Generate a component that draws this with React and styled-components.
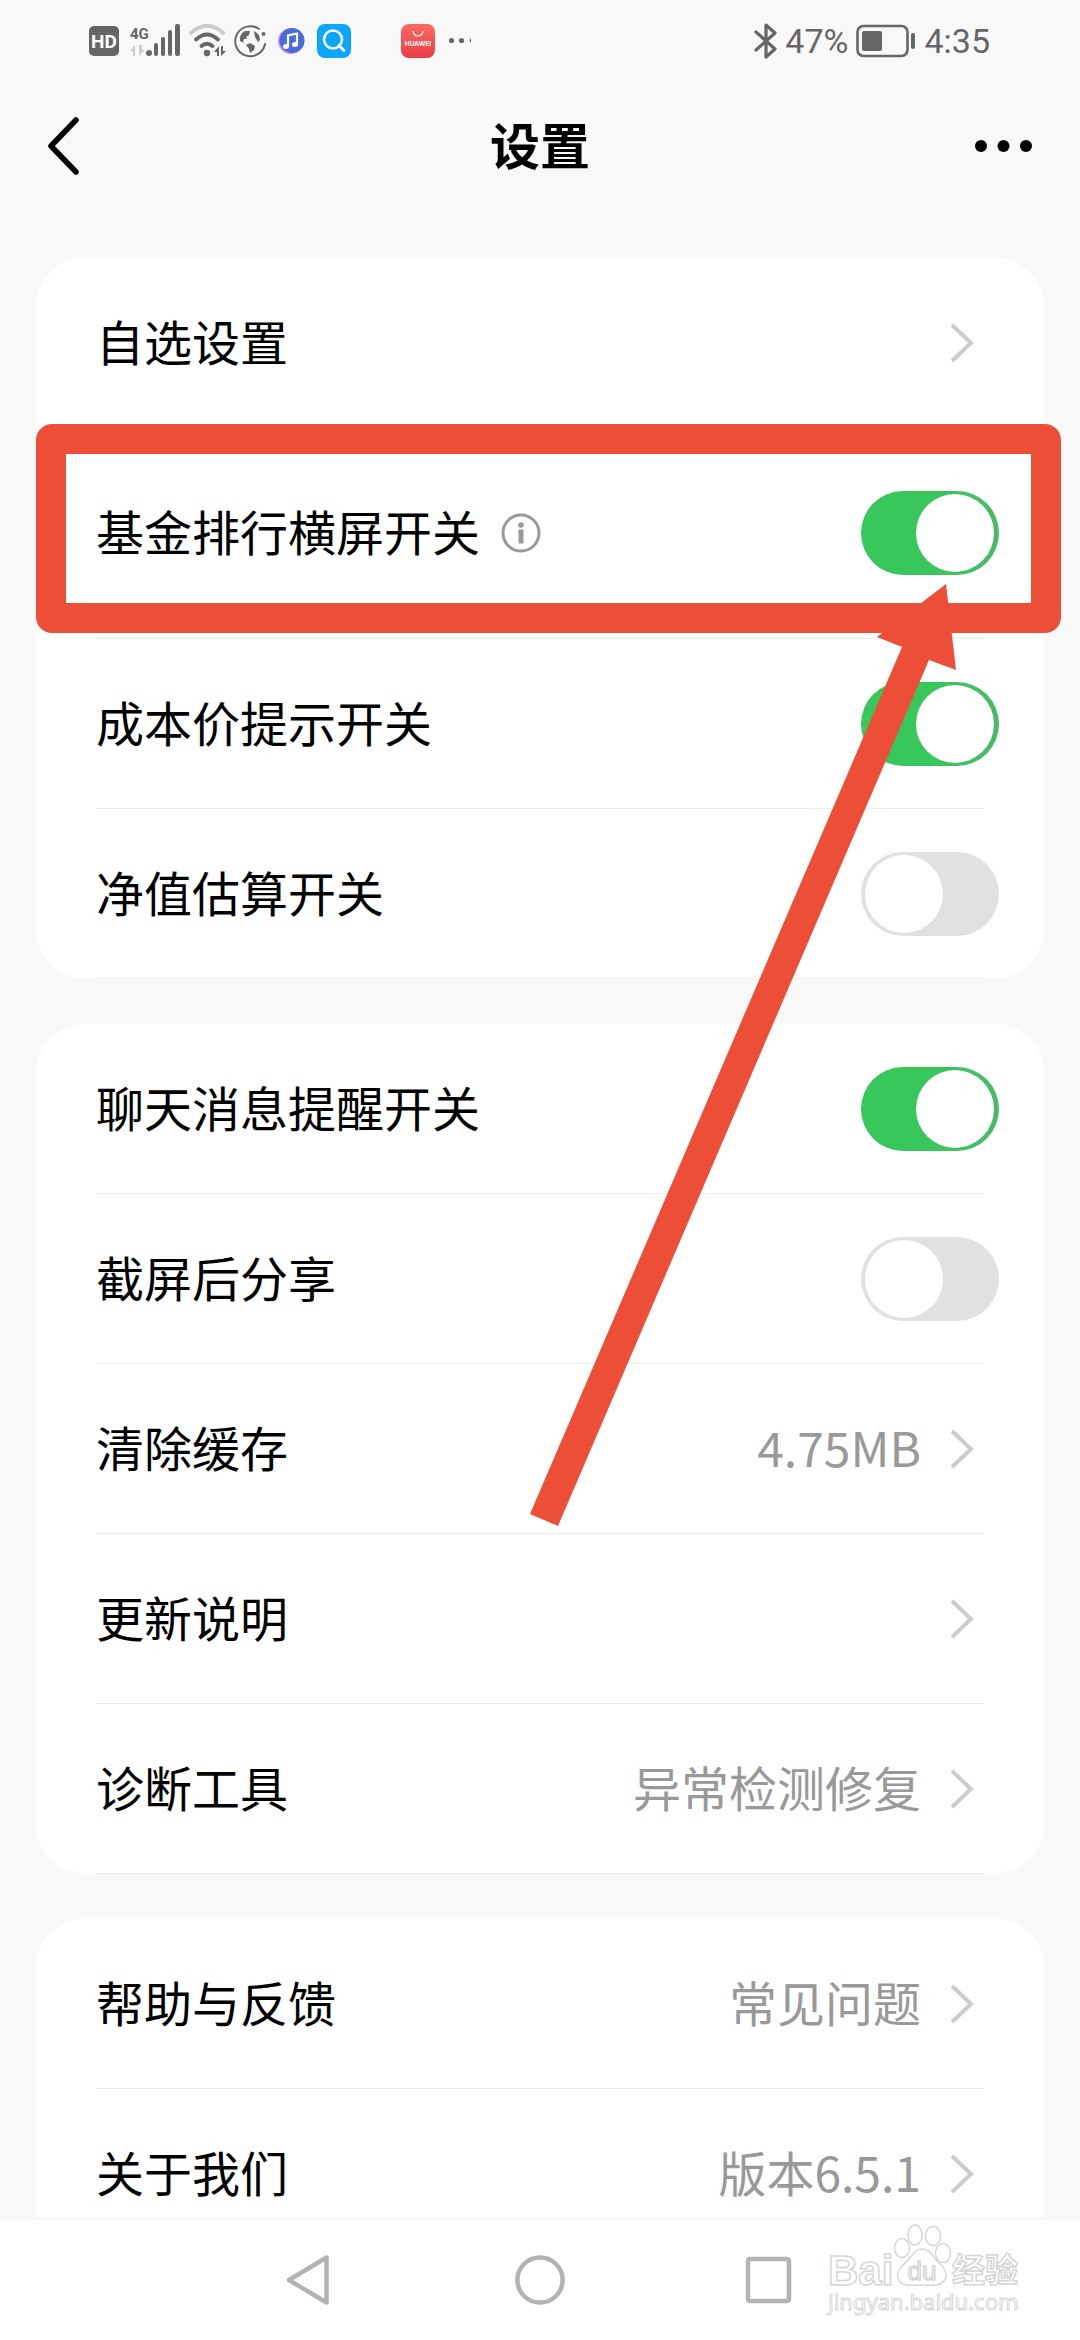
import React, { useState } from 'react'
import styled, { createGlobalStyle } from 'styled-components';


const GlobalStyle = createGlobalStyle`
* { box-sizing: border-box; }
body {
  margin: 0;
  background: #f8f8f8;
  color: #000;
  font-family: "Noto Sans CJK SC", "Noto Sans", sans-serif;
}
button { padding: 0; border: 0; background: none; font: inherit; color: inherit; cursor: pointer; }
svg { display: block; flex: none; }
`;

const Screen = styled.div`
display: flex;
flex-direction: column;
height: 100vh;
overflow: hidden;`;

const StatusBar = styled.div`
display: flex;
flex: none;
align-items: center;
justify-content: space-between;
height: 82px;
padding: 0 90px 0 89px;
color: #666;
font-family: Roboto, "Noto Sans", sans-serif;
font-size: 34px;
line-height: 40px;`;

const Group = styled.div`
display: flex;
align-items: center;
gap: ${({gap}) => gap}px;`;

const Header = styled.header`
display: grid;
flex: none;
grid-template-columns: 1fr auto 1fr;
align-items: center;
height: 128px;
padding: 0 48px;`;

const HeaderButton = styled.button`
display: flex;
align-items: center;
height: 80px;
justify-self: ${({side}) => side};`;

const Title = styled.h1`
margin: 0;
padding-bottom: 6px;
font-size: 50px;
font-weight: 700;
line-height: 72px;`;

const List = styled.main`
display: flex;
flex: 1;
flex-direction: column;
gap: 46px;
min-height: 0;
padding: 48px 36px 0;
overflow: hidden;`;

const Card = styled.section`
flex: none;
border-radius: 48px;
background: #fff;`;

const Row = styled.div`
position: relative;
display: flex;
align-items: center;
height: ${({tall}) => (tall ? '211px' : '170px')};
margin: 0 60px;
border-bottom: 1px solid #ededed;
color: inherit;
font-size: 48px;
line-height: 70px;
text-decoration: none;
&:last-child { margin-bottom: -1px; }`;

const Label = styled.label`
padding-bottom: 6px;
cursor: pointer;`;

const Value = styled.span`
margin-left: auto;
padding-bottom: 6px;
color: #999;`;

const Chevron = styled.svg`
margin: 0 10px 0 29px;`;

const InfoButton = styled.button`
margin-left: 21px;`;

const Switch = styled.input`
flex: none;
appearance: none;
width: 138px;
height: 84px;
margin: 0 -15px 0 auto;
padding: 3px 4px;
border-radius: 42px;
background: #e1e1e1;
cursor: pointer;
&::before {
  content: '';
  display: block;
  width: 78px;
  height: 78px;
  border-radius: 50%;
  background: #fff;
}
&:checked { background: linear-gradient(90deg, #37c75b 50%, #4aba66); }
&:checked::before { margin-left: 51px; }`;

const Highlight = styled.div`
position: absolute;
z-index: 2;
top: -4px;
right: -77px;
bottom: 5px;
left: -60px;
border: 30px solid #ed4e38;
border-radius: 16px;
pointer-events: none;`;

const Arrow = styled.svg`
position: absolute;
z-index: 3;
top: 156px;
right: 28px;
pointer-events: none;`;

const NavBar = styled.nav`
position: relative;
display: flex;
flex: none;
justify-content: center;
height: 120px;
margin-top: 2px;
background: #fff;`;

const NavButton = styled.button`
display: flex;
align-items: center;
justify-content: center;
width: 230px;`;

const Watermark = styled.svg`
position: absolute;
right: 56px;
bottom: 20px;
pointer-events: none;`;


const StatusIcons = () => (
  <Group gap={50}>
    <Group gap={8}>
      <svg width="33" height="34" viewBox="0 0 33 34">
        <rect x="0" y="2" width="30" height="30" rx="5" fill="#666" />
        <text x="15" y="24" textAnchor="middle" fontSize="19" fontWeight="700" fill="#fff" fontFamily="Roboto">HD</text>
      </svg>
      <svg width="51" height="34" viewBox="0 0 51 34" fill="#666">
        <text x="0" y="15" fontSize="15" fontWeight="700" fontFamily="Roboto">4G</text>
        <path d="M0 27l5-6v11H3v-5zM9 21v11l6-6h-3v-5z" fill="#ccc" />
        <circle cx="19" cy="29" r="3" />
        <rect x="24" y="19" width="4" height="13" rx="2" />
        <rect x="31" y="13" width="4" height="19" rx="2" />
        <rect x="38" y="6" width="4" height="26" rx="2" />
        <rect x="45" y="0" width="5" height="32" rx="2" />
      </svg>
      <svg width="37" height="34" viewBox="0 0 37 34" fill="none" strokeWidth="3.800" strokeLinecap="round">
        <path d="M2 9Q18 -5.500 34 9" stroke="#ccc" />
        <path d="M7 15.500Q18 5.500 29 15.500" stroke="#666" />
        <path d="M12.500 22Q18 17.500 23.500 22" stroke="#666" />
        <circle cx="18" cy="29" r="3.200" fill="#666" />
        <path d="M25 28l5-6v10h-2v-4zM32 22v10l5-5h-3v-5z" fill="#666" />
      </svg>
      <svg width="32" height="34" viewBox="0 0 32 34">
        <path d="M31 20A15 15 0 1 1 25 5" fill="none" stroke="#666" strokeWidth="2" strokeLinecap="round" />
        <circle cx="29.500" cy="10" r="2" fill="#666" />
        <path d="M6 17q-1-7 5-10l5 0-1 4-3 2 1 2-3 0-1 3 3 2zM12 21l4-2 5 3-1 4-4 3-1-4z" fill="#666" />
        <path d="M20 7q6 3 6 9l-2 2-3-5z" fill="#666" />
      </svg>
      <svg width="35" height="34" viewBox="0 0 35 34">
        <circle cx="17" cy="17" r="13" fill="#d68cf0" />
        <circle cx="18" cy="16.500" r="12.500" fill="#4a6bdc" />
        <path d="M14 22V11.500l9-2V20" fill="none" stroke="#fff" strokeWidth="2.200" />
        <ellipse cx="12" cy="22.500" rx="3" ry="2.500" fill="#fff" />
        <ellipse cx="21" cy="20.500" rx="3" ry="2.500" fill="#fff" />
      </svg>
      <svg width="34" height="34" viewBox="0 0 34 34">
        <rect width="34" height="34" rx="8" fill="#0ba7ff" />
        <circle cx="16" cy="15.500" r="9" fill="none" stroke="#fff" strokeWidth="2.600" />
        <path d="M22 21.500l5 5" stroke="#fff" strokeWidth="2.800" strokeLinecap="round" />
      </svg>
    </Group>
    <Group gap={14}>
      <svg width="34" height="34" viewBox="0 0 34 34">
        <defs>
          <linearGradient id="huawei" x2="0" y2="1">
            <stop stopColor="#fb6a5f" />
            <stop offset="1" stopColor="#ee3a4b" />
          </linearGradient>
        </defs>
        <rect width="34" height="34" rx="8" fill="url(#huawei)" />
        <path d="M12 7a5 5 0 0 0 10 0" fill="none" stroke="#fff" strokeWidth="1.200" />
        <text x="17" y="22" textAnchor="middle" fontSize="6.500" fontWeight="700" fill="#fff" fontFamily="Inter">HUAWEI</text>
      </svg>
      <svg width="22" height="34" viewBox="0 0 22 34" fill="#666">
        <circle cx="2.500" cy="16.500" r="2.600" />
        <circle cx="12.500" cy="16.500" r="2.600" />
        <path d="M22 14.200a2.600 2.600 0 0 0 0 4.600z" />
      </svg>
    </Group>
  </Group>
)

const BatteryStatus = () => (
  <Group gap={8}>
    <svg width="23" height="36" viewBox="0 0 23 36" fill="none" stroke="#666" strokeWidth="3.200" strokeLinejoin="round" strokeLinecap="round">
      <path d="M2 9l19 17-9 8V2l9 8L2 27" />
    </svg>
    <span>47%</span>
    <svg width="60" height="34" viewBox="0 0 60 34">
      <rect x="1.500" y="2" width="50" height="30" rx="6" fill="none" stroke="#666" strokeWidth="2.600" />
      <rect x="6" y="7" width="20" height="20" rx="2" fill="#666" />
      <rect x="55" y="9" width="4" height="16" rx="2" fill="#666" />
    </svg>
    <span>4:35</span>
  </Group>
)

const LinkRow = ({ label, value }) => (
  <Row as="a" href="#">
    <Label as="span">{label}</Label>
    <Value>{value}</Value>
    <Chevron width="24" height="40" viewBox="0 0 24 40" fill="none" stroke="#ccc" strokeWidth="4">
      <path d="M2 2l19 18L2 38" />
    </Chevron>
  </Row>
)

const SwitchRow = ({ id, label, on, tall, info, children }) => {
  const [checked, setChecked] = useState(!!on)
  return (
    <Row tall={tall ? 1 : undefined}>
      <Label htmlFor={id}>{label}</Label>
      {info && (
        <InfoButton type="button" aria-label="说明">
          <svg width="40" height="40" viewBox="0 0 40 40" fill="#999">
            <circle cx="20" cy="20" r="18" fill="none" stroke="#999" strokeWidth="3" />
            <circle cx="20" cy="12" r="2.800" />
            <rect x="17.500" y="16.500" width="5" height="14" />
          </svg>
        </InfoButton>
      )}
      <Switch id={id} type="checkbox" role="switch" checked={checked} onChange={e => setChecked(e.target.checked)} />
      {children}
    </Row>
  )
}

const App = () => {
  return (
    <>
      <GlobalStyle />
      <Screen>
        <StatusBar>
          <StatusIcons />
          <BatteryStatus />
        </StatusBar>

        <Header>
          <HeaderButton side="start" aria-label="返回">
            <svg width="32" height="58" viewBox="0 0 32 58" fill="none" stroke="#000" strokeWidth="5.500" strokeLinecap="round" strokeLinejoin="round">
              <path d="M28 3L3 29l25 26" />
            </svg>
          </HeaderButton>
          <Title>设置</Title>
          <HeaderButton side="end" aria-label="更多">
            <svg width="57" height="12" viewBox="0 0 57 12">
              <circle cx="6" cy="6" r="6" />
              <circle cx="28.500" cy="6" r="6" />
              <circle cx="51" cy="6" r="6" />
            </svg>
          </HeaderButton>
        </Header>

        <List>
          <Card>
            <LinkRow label="自选设置" />
            <SwitchRow id="landscape" label="基金排行横屏开关" on tall info>
              <Highlight />
              <Arrow width="426" height="942" viewBox="0 0 426 942">
                <path d="M416 0L347 53l25 10L0 930l28 12L399 76l27 10z" fill="#ed4e38" />
              </Arrow>
            </SwitchRow>
            <SwitchRow id="cost" label="成本价提示开关" on />
            <SwitchRow id="estimate" label="净值估算开关" />
          </Card>

          <Card>
            <SwitchRow id="chat" label="聊天消息提醒开关" on />
            <SwitchRow id="share" label="截屏后分享" />
            <LinkRow label="清除缓存" value="4.75MB" />
            <LinkRow label="更新说明" />
            <LinkRow label="诊断工具" value="异常检测修复" />
          </Card>

          <Card>
            <LinkRow label="帮助与反馈" value="常见问题" />
            <LinkRow label="关于我们" value="版本6.5.1" />
          </Card>
        </List>

        <NavBar>
          <NavButton aria-label="返回上一页">
            <svg width="50" height="50" viewBox="0 0 50 50" fill="none" stroke="#b3b3b3" strokeWidth="4.500" strokeLinejoin="round">
              <path d="M41.500 2.500v45L4 25z" />
            </svg>
          </NavButton>
          <NavButton aria-label="主屏幕">
            <svg width="50" height="50" viewBox="0 0 50 50" fill="none" stroke="#b3b3b3" strokeWidth="4.500">
              <circle cx="25" cy="25" r="22.600" />
            </svg>
          </NavButton>
          <NavButton aria-label="最近任务">
            <svg width="50" height="50" viewBox="0 0 50 50" fill="none" stroke="#b3b3b3" strokeWidth="4.500">
              <rect x="3" y="4" width="41" height="42" rx="2" />
            </svg>
          </NavButton>
          <Watermark width="200" height="100" viewBox="0 0 200 100" fill="#fff" stroke="#d6d6d6" strokeWidth="1.500">
            <text x="4" y="65" fontSize="42" fontWeight="700" fontFamily="Liberation Sans">Bai</text>
            <ellipse cx="78" cy="28" rx="7.500" ry="9.500" />
            <ellipse cx="91" cy="15" rx="7" ry="10" />
            <ellipse cx="109" cy="16" rx="7.500" ry="9.500" />
            <ellipse cx="119" cy="33" rx="7.500" ry="9.500" />
            <path d="M98 29c8 0 11 8 17 14 7 6 9 13 5 18-5 6-14 4-22 4s-17 2-22-3c-4-5-3-12 5-19 6-5 9-14 17-14z" />
            <text x="98" y="60" textAnchor="middle" fontSize="26" fontFamily="Liberation Sans">du</text>
            <text x="128" y="62" fontSize="33" fontWeight="700">经验</text>
            <text x="4" y="90" fontSize="22" fontFamily="Noto Sans" strokeWidth="1">jingyan.baidu.com</text>
          </Watermark>
        </NavBar>
      </Screen>
    </>
  )
}

export default App
